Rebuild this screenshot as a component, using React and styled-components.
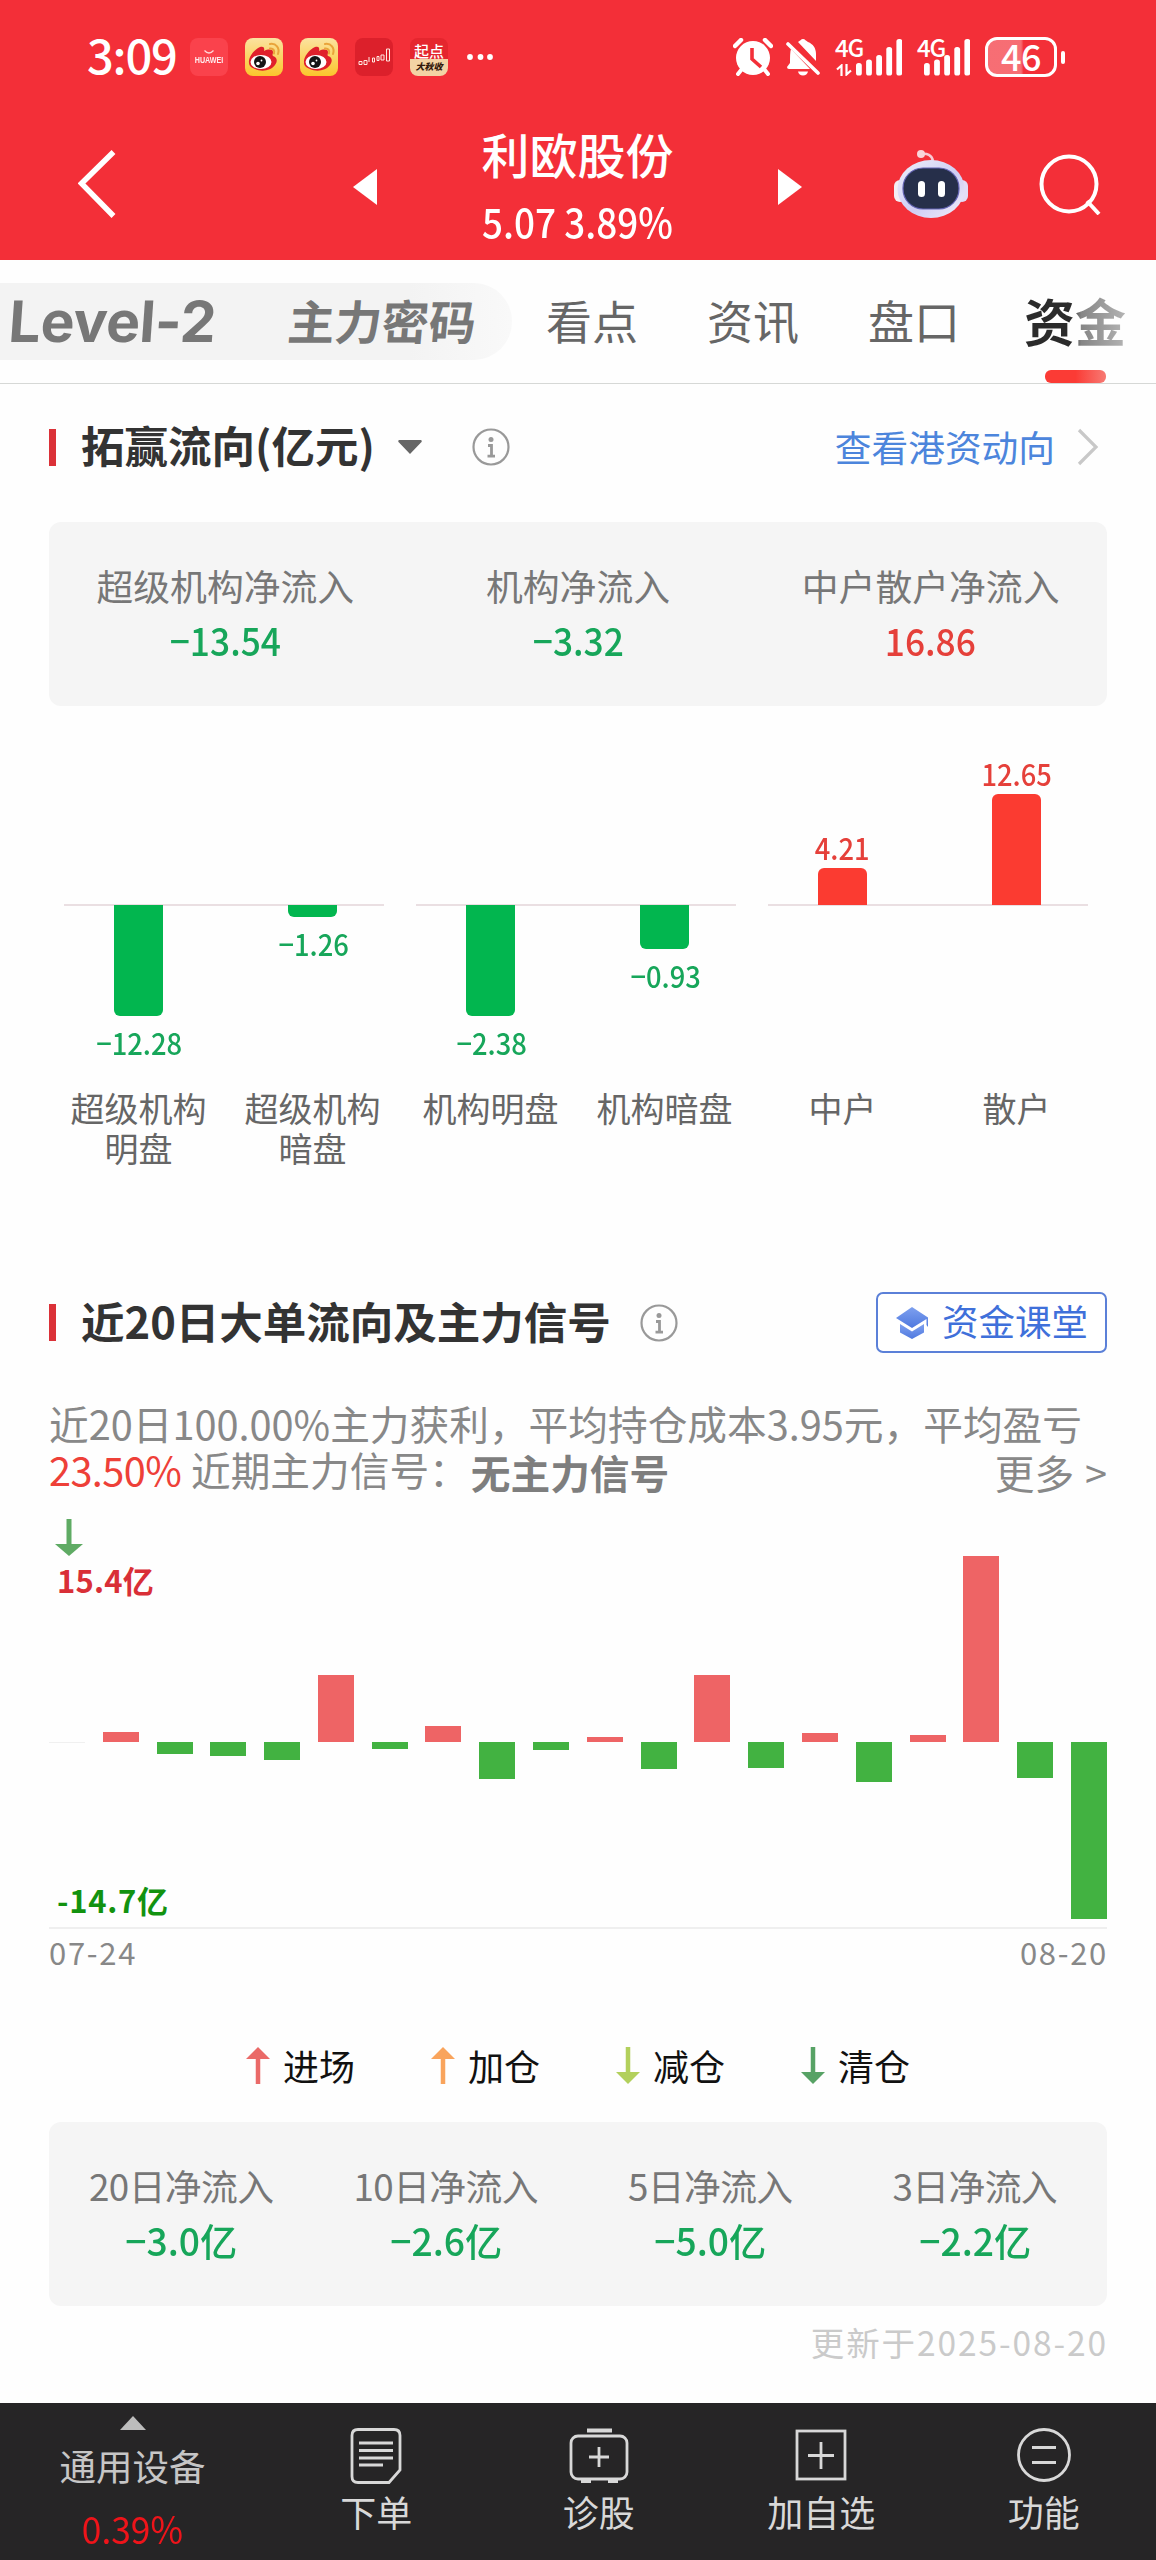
import React from "react";
import styled, { createGlobalStyle } from "styled-components";

const GlobalStyle = createGlobalStyle`
  * { box-sizing: border-box; }
  body {
    margin: 0;
    background: #fefefe;
    font-family: "Noto Sans CJK SC", "Noto Sans", sans-serif;
  }
`;

const RED = "#f32f38";
const UP = "#e5403a";
const DOWN = "#17a65a";

const Page = styled.div`
  width: 1156px;
  height: 2560px;
  display: flex;
  flex-direction: column;
  background: #fefefe;
  overflow: hidden;
  white-space: nowrap;
`;

/* ---------- header ---------- */

const Header = styled.header`
  height: 260px;
  background: ${RED};
  color: #fff;
`;

const StatusBar = styled.div`
  height: 114px;
  padding: 0 91px 0 87px;
  display: flex;
  align-items: center;
  justify-content: space-between;
`;

const StatusGroup = styled.div`
  display: flex;
  align-items: center;
  gap: ${(p) => p.$gap}px;
`;

const Clock = styled.span`
  width: 86px;
  font-size: 47px;
  font-weight: 500;
  line-height: 60px;
  letter-spacing: -1.2px;
  padding-bottom: 7px;
`;

const AppIcon = styled.span`
  width: 38px;
  height: 38px;
  border-radius: 8px;
  display: flex;
  flex-direction: column;
  align-items: center;
  justify-content: center;
  overflow: hidden;
  background: ${(p) => p.$bg};
`;

const HuaweiWord = styled.span`
  font: 700 8.5px/10px "Liberation Sans", sans-serif;
  transform: scaleX(0.84);
  opacity: 0.9;
`;

const QidianTop = styled.span`
  font-size: 15px;
  font-weight: 500;
  line-height: 16px;
  padding-top: 5px;
`;

const QidianBottom = styled.span`
  width: 38px;
  height: 17px;
  background: #f3d3a4;
  color: #33190c;
  font-size: 9px;
  font-weight: 900;
  line-height: 16px;
  text-align: center;
  font-style: italic;
`;

const SignalBox = styled.span`
  position: relative;
  display: flex;
  justify-content: flex-end;
  width: ${(p) => p.$width}px;
  height: 38px;
`;

const NetLabel = styled.span`
  position: absolute;
  left: 0;
  top: -3px;
  font-size: 24px;
  font-weight: 500;
  line-height: 24px;
  letter-spacing: -1.3px;
`;

const DataArrows = styled.svg`
  position: absolute;
  left: 1px;
  bottom: 0;
`;

const Battery = styled.span`
  width: 72px;
  height: 40px;
  border: 3px solid #fff;
  border-radius: 12px;
  background: linear-gradient(90deg, rgba(255, 255, 255, 0.3) 50%, transparent 54%);
  font-size: 36px;
  font-weight: 500;
  line-height: 30px;
  letter-spacing: -0.5px;
  text-align: center;
`;

const BatteryTip = styled.span`
  width: 4px;
  height: 13px;
  margin-left: 4px;
  border-radius: 2px;
  background: #fff;
`;

const BatteryWrap = styled.span`
  display: flex;
  align-items: center;
`;

const NavBar = styled.nav`
  height: 146px;
  display: grid;
  grid-template-columns: 353px 24px 401px 24px 354px;
  align-items: center;
`;

const NavLeft = styled.div`
  display: flex;
  padding: 0 0 6px 78px;
`;

const NavRight = styled.div`
  display: flex;
  align-items: center;
  gap: 69px;
  padding: 0 0 6px 91px;
`;

const StockHead = styled.div`
  text-align: center;
`;

const StockName = styled.h1`
  margin: 0;
  font-size: 48px;
  font-weight: 500;
  line-height: 66px;
`;

const StockPrice = styled.div`
  padding-top: 2px;
  font-size: 40.5px;
  font-weight: 500;
  line-height: 66px;
  transform: scaleX(0.91);
`;

/* ---------- tabs ---------- */

const TabBar = styled.div`
  height: 124px;
  display: flex;
  align-items: flex-start;
  border-bottom: 1px solid #d6d8d6;
  background: #fefefe;
`;

const TabPill = styled.div`
  width: 512px;
  height: 77px;
  margin: 23px 34px 0 0;
  padding-left: 9px;
  display: flex;
  align-items: center;
  border-radius: 0 38px 38px 0;
  background: linear-gradient(90deg, #f3f3f3 80%, #f9f9f9);
  color: #777;
`;

const LevelTab = styled.span`
  width: 279px;
  font-family: Inter, "Noto Sans", sans-serif;
  font-size: 57px;
  font-weight: 700;
  line-height: 77px;
  letter-spacing: -0.3px;
  transform: skewX(-4deg);
`;

const CodeTab = styled.span`
  font-size: 47px;
  font-weight: 700;
  line-height: 72px;
  padding-bottom: 3px;
  transform: skewX(-5deg);
`;

const Tab = styled.span`
  margin: 23px 69px 0 0;
  font-size: 46px;
  line-height: 72px;
  color: #666;
`;

const ActiveTab = styled.div`
  margin: 23px 0 0 -5px;
  display: flex;
  flex-direction: column;
  align-items: center;
`;

const ActiveText = styled.span`
  font-size: 51px;
  font-weight: 700;
  line-height: 74px;
  color: transparent;
  background: linear-gradient(90deg, #2b2b2b 46%, #858585 56%, #b4b4b4);
  background-clip: text;
  -webkit-background-clip: text;
`;

const ActiveLine = styled.span`
  width: 61px;
  height: 13px;
  margin-top: 13px;
  border-radius: 6px;
  background: linear-gradient(90deg, #fb3b35 50%, #f77a74);
`;

/* ---------- sections ---------- */

const Content = styled.main`
  padding: 0 49px;
`;

const SectionHead = styled.div`
  height: ${(p) => p.$height}px;
  display: flex;
  align-items: center;
  justify-content: space-between;
`;

const HeadLeft = styled.div`
  display: flex;
  align-items: center;
`;

const Marker = styled.span`
  width: 7px;
  height: 37px;
  margin: 0 25px 0 0;
  background: #db3138;
`;

const SectionTitle = styled.h2`
  margin: -4px 0 0;
  font-size: 43.5px;
  font-weight: 700;
  line-height: 60px;
  color: #333;
`;

const Caret = styled.svg`
  margin: 0 50px 0 23px;
`;

const InfoSlot = styled.span`
  display: flex;
  margin-left: ${(p) => p.$gap}px;
`;

const HeadLink = styled.a`
  display: flex;
  align-items: center;
  gap: 22px;
  padding-right: 8px;
  font-size: 36.7px;
  line-height: 50px;
  color: #4c85dc;
`;

const LinkText = styled.span`
  margin-top: -3px;
`;

const ClassButton = styled.button`
  width: 231px;
  height: 61px;
  display: flex;
  align-items: center;
  justify-content: center;
  gap: 13px;
  padding: 0;
  border: 2px solid #5b80d8;
  border-radius: 7px;
  background: #fff;
  color: #3f70da;
  font-family: inherit;
  font-size: 36.5px;
  line-height: 50px;
`;

/* ---------- summary cards ---------- */

const Card = styled.div`
  height: 184px;
  margin-top: ${(p) => p.$top}px;
  padding-top: 38px;
  display: grid;
  grid-template-columns: repeat(${(p) => p.$cols}, 1fr);
  align-items: start;
  border-radius: 12px;
  background: #f5f5f5;
  text-align: center;
`;

const CardLabel = styled.div`
  font-size: 36.8px;
  line-height: 50px;
  letter-spacing: ${(p) => p.$tight || 0}px;
  color: #777;
`;

const CardValue = styled.div`
  margin-top: 2px;
  font-size: 38px;
  font-weight: 500;
  line-height: 56px;
  transform: scaleX(${(p) => p.$fit});
  color: ${(p) => (p.$up ? UP : DOWN)};
`;

/* ---------- grouped chart ---------- */

const GroupRow = styled.div`
  display: flex;
  gap: 32px;
  padding-left: 15px;
`;

const Group = styled.div`
  width: 320px;
  display: grid;
  grid-template-columns: 149px 143px;
  column-gap: 28px;
  background: linear-gradient(#eadfe2, #eadfe2) 0 198px / 100% 2px no-repeat;
`;

const GroupCol = styled.div`
  display: flex;
  flex-direction: column;
  align-items: center;
`;

const UpperHalf = styled.div`
  height: 199px;
  display: flex;
  flex-direction: column;
  align-items: center;
  justify-content: flex-end;
`;

const LowerHalf = styled.div`
  height: 183px;
  display: flex;
  flex-direction: column;
  align-items: center;
`;

const GroupBar = styled.div`
  width: 49px;
  border-radius: ${(p) => (p.$up ? "6px 6px 0 0" : "0 0 6px 6px")};
  background: ${(p) => (p.$up ? "#fb3b31" : "#02b64f")};
`;

const BarValue = styled.div`
  font-size: 30px;
  font-weight: 500;
  line-height: 40px;
  transform: scaleX(0.91);
  padding: ${(p) => (p.$up ? "0 0 1px" : "6px 0 0 2px")};
  color: ${(p) => (p.$up ? UP : DOWN)};
`;

const BarLabel = styled.div`
  font-size: 34px;
  line-height: 40px;
  height: 80px;
  margin-bottom: 124px;
  text-align: center;
  color: #666;
`;

/* ---------- summary text ---------- */

const Summary = styled.div`
  margin-top: 47px;
  font-size: 39.7px;
  line-height: 46px;
  color: #888;
`;

const SummaryLine = styled.div`
  height: 46px;
  display: flex;
`;

const Profit = styled.span`
  width: 142px;
  letter-spacing: -0.6px;
  color: #ee4038;
`;

const Signal = styled.strong`
  margin-left: 2px;
  padding-top: 3px;
  font-weight: 700;
  color: #7e7e7e;
`;

const More = styled.span`
  margin-left: auto;
  padding-top: 3px;
  word-spacing: 2px;
`;

const ArrowSlot = styled.div`
  display: flex;
  height: 37px;
  margin-top: 27px;
  padding-left: 6px;
`;

/* ---------- 20 day chart ---------- */

const DayChart = styled.div`
  position: relative;
  height: 373px;
  display: flex;
  justify-content: space-between;
  border-bottom: 2px solid #efefef;
`;

const DayCol = styled.div`
  width: 36px;
  padding-top: ${(p) => (p.$v > 0 ? 186 - p.$v : 186)}px;
`;

const DayBar = styled.div`
  height: ${(p) => Math.abs(p.$v) || 1}px;
  background: ${(p) => (p.$v > 0 ? "#ee6465" : p.$v < 0 ? "#42b241" : "#f0f0f0")};
`;

const AxisMark = styled.span`
  position: absolute;
  left: 8px;
  ${(p) => (p.$up ? "top: 4px;" : "bottom: 7px;")}
  font-size: 31px;
  font-weight: 700;
  line-height: 40px;
  letter-spacing: ${(p) => (p.$up ? 0.2 : 0.7)}px;
  color: ${(p) => (p.$up ? "#d92f37" : "#12920f")};
`;

const Dates = styled.div`
  display: flex;
  justify-content: space-between;
  font-size: 31px;
  line-height: 46px;
  letter-spacing: 1.7px;
  margin-right: -1px;
  color: #888;
`;

const Legend = styled.div`
  height: 40px;
  margin-top: 70px;
  display: flex;
  justify-content: center;
  gap: 76px;
`;

const LegendItem = styled.span`
  display: flex;
  align-items: center;
  gap: 13px;
  font-size: 36px;
  line-height: 40px;
  color: #111;
`;

const Updated = styled.div`
  margin: 16px -1px 0 0;
  font-size: 33.5px;
  line-height: 40px;
  letter-spacing: 1.9px;
  text-align: right;
  color: #cacaca;
`;

/* ---------- bottom bar ---------- */

const Footer = styled.footer`
  height: 157px;
  margin-top: auto;
  display: grid;
  grid-template-columns: 265px repeat(4, 222.5px);
  background: #262526;
  color: #d8d8d8;
  text-align: center;
`;

const Sector = styled.div`
  display: flex;
  flex-direction: column;
  align-items: center;
  padding-top: 13px;
  font-size: 36.5px;
`;

const SectorName = styled.span`
  margin-top: 13px;
  line-height: 46px;
  color: #c6c6c6;
`;

const SectorRate = styled.span`
  margin-top: 16px;
  font-size: 38px;
  line-height: 46px;
  transform: scaleX(0.93);
  color: #ee141a;
`;

const FootItem = styled.div`
  display: flex;
  flex-direction: column;
  align-items: center;
  padding-top: 24px;
  font-size: 36px;
  line-height: 46px;
`;

const FootIcon = styled.svg`
  width: 60px;
  height: 58px;
  margin-bottom: 3px;
  fill: none;
  stroke: #d8d8d8;
  stroke-width: 2.8;
`;

/* ---------- drawings ---------- */

const Weibo = () => (
  <AppIcon $bg="linear-gradient(#fbe3a0, #fbc62c)">
    <svg width="38" height="38" viewBox="0 0 38 38">
      <path d="M4 25C3 19 10 11 15 9c3-1 5 0 4 4 4-2 9-2 9 1 0 2-1 3 0 4 4 1 5 5 2 9-4 6-14 7-20 4-3-1-6-3-6-6z" fill="#e0202b" />
      <ellipse cx="16" cy="24" rx="10.5" ry="7" fill="#fff" />
      <circle cx="15" cy="24" r="6" fill="#151515" />
      <circle cx="13" cy="25.5" r="1.8" fill="#fff" />
      <circle cx="16.5" cy="22.5" r="0.9" fill="#fff" />
      <path d="M25 6c6-1 10 4 8 10M25 10.5c3-.5 5 2 4 5" fill="none" stroke="#e9a43a" strokeWidth="2" strokeLinecap="round" />
    </svg>
  </AppIcon>
);

const Huawei = () => (
  <AppIcon $bg="#fa424c">
    <svg width="12" height="5" viewBox="0 0 12 5">
      <path d="M1.500 .5q4.500 5 9 0" fill="none" stroke="#ffd5d5" strokeWidth="1.300" />
    </svg>
    <HuaweiWord>HUAWEI</HuaweiWord>
  </AppIcon>
);

const TrendApp = () => (
  <AppIcon $bg="#dc202b">
    <svg width="38" height="38" viewBox="0 0 38 38" fill="none" stroke="#ffe9e2" strokeWidth="1">
      <path d="M4 23.500h3v3H4zM9 22.500h3v4H9zM14 19v5M17.500 20h2v4h-2zM22 18.500h2v4h-2zM26 17h3v5h-3zM31.500 11h3v12h-3z" />
    </svg>
  </AppIcon>
);

const Dots = () => (
  <svg width="28" height="6" viewBox="-2 0 28 6" fill="#fff">
    <circle cx="3" cy="3" r="2.900" />
    <circle cx="13.500" cy="3" r="2.900" />
    <circle cx="23" cy="3" r="2.900" />
  </svg>
);

const AlarmSvg = styled.svg`
  margin-right: -2px;
`;

const Alarm = () => (
  <AlarmSvg width="40" height="38" viewBox="0 0 40 38">
    <path d="M2 8l6-6M38 8l-6-6" stroke="#fff" strokeWidth="4.500" strokeLinecap="round" />
    <path d="M9 31l-4 5M31 31l4 5" stroke="#fff" strokeWidth="4" strokeLinecap="round" />
    <circle cx="20" cy="20" r="17" fill="#fff" />
    <path d="M19 10v11l9 8" fill="none" stroke={RED} strokeWidth="3.600" />
  </AlarmSvg>
);

const Mute = () => (
  <svg width="34" height="38" viewBox="0 0 34 38">
    <path d="M12 4c2-1 3-3 5-3s3 2 5 3c5 2 8 6 8 12v7z" fill="#fff" />
    <path d="M5 11c-1 3-1 8-1 14l-3 4q0 2 2 2h21z" fill="#fff" />
    <path d="M12 33.500h10q-1 4-5 4t-5-4z" fill="#fff" />
    <path d="M2 6l30 29" stroke="#fff" strokeWidth="3.600" strokeLinecap="round" />
  </svg>
);

const BAR_TOPS = [25, 21.5, 17, 9, 1];

const CellSignal = ({ width, data }) => (
  <SignalBox $width={width}>
    <NetLabel>4G</NetLabel>
    {data && (
      <DataArrows width="17" height="12" viewBox="0 0 17 12" fill="none" stroke="#fff" strokeWidth="2.200">
        <path d="M1 5.500L5.500 1.500V12M10.500 0v10.500L15 6.500" />
      </DataArrows>
    )}
    <svg width="46" height="38" viewBox="0 0 46 38" fill="#fff">
      {BAR_TOPS.map((t, i) => (
        <rect key={t} x={i * 10.1} y={t} width="5.800" height={37.5 - t} rx="2.600" />
      ))}
    </svg>
  </SignalBox>
);

const Robot = () => (
  <svg width="76" height="70" viewBox="0 0 76 70">
    <defs>
      <linearGradient id="shell" x1="0" y1="0" x2="1" y2="1">
        <stop offset="0" stopColor="#eef0fc" />
        <stop offset="0.550" stopColor="#cfcdf3" />
        <stop offset="1" stopColor="#f3eefa" />
      </linearGradient>
    </defs>
    <path d="M28 5c6-1 11 1 12 7" fill="none" stroke="#f8c9d4" strokeWidth="2.500" />
    <circle cx="28" cy="5" r="4" fill="#f9d5da" />
    <rect x="1" y="31" width="12" height="22" rx="6" fill="#f4eef4" />
    <rect x="63" y="31" width="12" height="22" rx="6" fill="#e3dcf6" />
    <ellipse cx="38" cy="40" rx="33.500" ry="29" fill="url(#shell)" />
    <rect x="10" y="19" width="56" height="41" rx="20" fill="#262f4a" stroke="#6464b4" strokeWidth="1.200" />
    <rect x="25" y="32" width="7" height="16" rx="3.500" fill="#fff" />
    <rect x="45" y="32" width="7" height="16" rx="3.500" fill="#fff" />
  </svg>
);

const Info = () => (
  <svg width="38" height="38" viewBox="0 0 38 38" fill="none" stroke="#999">
    <circle cx="19" cy="19" r="17.500" strokeWidth="2.200" />
    <circle cx="19" cy="11.500" r="2.500" fill="#999" stroke="none" />
    <path d="M16 17.500h3.500V28M15.500 28.200h7.500" strokeWidth="2.800" />
  </svg>
);

const CapIcon = () => (
  <svg width="34" height="32" viewBox="0 0 34 32">
    <defs>
      <linearGradient id="cap" x1="0" y1="0" x2="0" y2="1">
        <stop offset="0" stopColor="#7ea0ef" />
        <stop offset="1" stopColor="#4f79df" />
      </linearGradient>
    </defs>
    <path d="M17 0L33 10.500V20l-1.500-2v-6L17 21 1 11z" fill="url(#cap)" />
    <path d="M5 17l12 7.500L29 17v8.500L17 32 5 25.500z" fill="url(#cap)" />
  </svg>
);

const Arrow = ({ color, up, width, height, stroke, head }) => (
  <svg width={width} height={height} viewBox={`0 0 ${width} ${height}`}>
    <g transform={up ? `rotate(180 ${width / 2} ${height / 2})` : undefined} fill={color}>
      <rect x={(width - stroke) / 2} y="0" width={stroke} height={height - head + 1} />
      <path d={`M0 ${height - head}H${width}L${width / 2} ${height}z`} />
    </g>
  </svg>
);

/* ---------- data ---------- */

const flows = [
  { label: "超级机构净流入", value: "−13.54" },
  { label: "机构净流入", value: "−3.32" },
  { label: "中户散户净流入", value: "16.86", up: true },
];

const groups = [
  [
    { label: ["超级机构", "明盘"], value: "−12.28", h: 111 },
    { label: ["超级机构", "暗盘"], value: "−1.26", h: 12 },
  ],
  [
    { label: ["机构明盘"], value: "−2.38", h: 111 },
    { label: ["机构暗盘"], value: "−0.93", h: 44 },
  ],
  [
    { label: ["中户"], value: "4.21", h: 37, up: true },
    { label: ["散户"], value: "12.65", h: 111, up: true },
  ],
];

const days = [0, 10, -12, -13.5, -18, 67, -7, 16, -36.5, -8, 5, -26.5, 67.5, -25.5, 9, -40, 7, 186, -36, -176.5];

const legend = [
  { text: "进场", color: "#ea6a68", up: true },
  { text: "加仓", color: "#f9a45c", up: true },
  { text: "减仓", color: "#b2d05c" },
  { text: "清仓", color: "#57a265" },
];

const totals = [
  { label: "20日净流入", value: "−3.0亿" },
  { label: "10日净流入", value: "−2.6亿" },
  { label: "5日净流入", value: "−5.0亿" },
  { label: "3日净流入", value: "−2.2亿" },
];

const actions = [
  {
    text: "下单",
    icon: (
      <>
        <path d="M12 2.500h36q6 0 6 6V43L43 55.500H12q-6 0-6-6v-41q0-6 6-6z" />
        <path d="M13 16h34M13 23.500h34M13 31h34M13 38h24" />
      </>
    ),
  },
  {
    text: "诊股",
    icon: (
      <>
        <path d="M18 3.500h25" strokeWidth="4" />
        <rect x="2" y="9" width="56" height="43" rx="7" />
        <path d="M30 20v20M20 30h20" />
        <path d="M12 54h10M39 54h10" strokeWidth="4" />
      </>
    ),
  },
  {
    text: "加自选",
    icon: (
      <>
        <rect x="6" y="4" width="48" height="48" />
        <path d="M30 15v27M17 28.500h26" />
      </>
    ),
  },
  {
    text: "功能",
    icon: (
      <>
        <circle cx="30" cy="28" r="25.500" />
        <path d="M18 20.500h24M18 35.500h24" />
      </>
    ),
  },
];

export default function App() {
  return (
    <Page>
      <GlobalStyle />
      <Header>
        <StatusBar>
          <StatusGroup $gap={17}>
            <Clock>3:09</Clock>
            <Huawei />
            <Weibo />
            <Weibo />
            <TrendApp />
            <AppIcon $bg="#e5262e">
              <QidianTop>起点</QidianTop>
              <QidianBottom>大秋收</QidianBottom>
            </AppIcon>
            <Dots />
          </StatusGroup>
          <StatusGroup $gap={15}>
            <Alarm />
            <Mute />
            <CellSignal width={67} data />
            <CellSignal width={53} />
            <BatteryWrap>
              <Battery>46</Battery>
              <BatteryTip />
            </BatteryWrap>
          </StatusGroup>
        </StatusBar>
        <NavBar>
          <NavLeft>
            <svg width="38" height="68" viewBox="0 0 38 68">
              <path d="M35.500 2L3.500 33.500 35.500 66" fill="none" stroke="#fff" strokeWidth="5.500" />
            </svg>
          </NavLeft>
          <svg width="24" height="36" viewBox="0 0 24 36">
            <path d="M24 0v36L0 18z" fill="#fff" />
          </svg>
          <StockHead>
            <StockName>利欧股份</StockName>
            <StockPrice>5.07 3.89%</StockPrice>
          </StockHead>
          <svg width="24" height="36" viewBox="0 0 24 36">
            <path d="M0 0v36l24-18z" fill="#fff" />
          </svg>
          <NavRight>
            <Robot />
            <svg width="63" height="62" viewBox="0 0 63 62" fill="none" stroke="#fff" strokeWidth="4">
              <circle cx="31" cy="31" r="27.500" />
              <path d="M49 48l12 13" />
            </svg>
          </NavRight>
        </NavBar>
      </Header>

      <TabBar>
        <TabPill>
          <LevelTab>Level-2</LevelTab>
          <CodeTab>主力密码</CodeTab>
        </TabPill>
        <Tab>看点</Tab>
        <Tab>资讯</Tab>
        <Tab>盘口</Tab>
        <ActiveTab>
          <ActiveText>资金</ActiveText>
          <ActiveLine />
        </ActiveTab>
      </TabBar>

      <Content>
        <SectionHead $height={126}>
          <HeadLeft>
            <Marker />
            <SectionTitle>拓赢流向(亿元)</SectionTitle>
            <Caret width="24" height="14" viewBox="0 0 24 14">
              <path d="M1 0h22q1.500 1 0 2.500L12 14 1 2.500Q-.5 1 1 0z" fill="#666" />
            </Caret>
            <Info />
          </HeadLeft>
          <HeadLink>
            <LinkText>查看港资动向</LinkText>
            <svg width="22" height="38" viewBox="0 0 22 38">
              <path d="M2 2l17 17L2 36" fill="none" stroke="#c8c8c8" strokeWidth="3.200" />
            </svg>
          </HeadLink>
        </SectionHead>

        <Card $cols={3} $top={12}>
          {flows.map((f) => (
            <div key={f.label}>
              <CardLabel>{f.label}</CardLabel>
              <CardValue $up={f.up} $fit={0.93}>{f.value}</CardValue>
            </div>
          ))}
        </Card>

        <GroupRow>
          {groups.map((g, i) => (
            <Group key={i}>
              {g.map((b) => (
                <GroupCol key={b.value}>
                  <UpperHalf>
                    {b.up && (
                      <>
                        <BarValue $up>{b.value}</BarValue>
                        <GroupBar $up style={{ height: b.h }} />
                      </>
                    )}
                  </UpperHalf>
                  <LowerHalf>
                    {!b.up && (
                      <>
                        <GroupBar style={{ height: b.h }} />
                        <BarValue>{b.value}</BarValue>
                      </>
                    )}
                  </LowerHalf>
                  <BarLabel>
                    {b.label.map((l) => (
                      <div key={l}>{l}</div>
                    ))}
                  </BarLabel>
                </GroupCol>
              ))}
            </Group>
          ))}
        </GroupRow>

        <SectionHead $height={61}>
          <HeadLeft>
            <Marker />
            <SectionTitle>近20日大单流向及主力信号</SectionTitle>
            <InfoSlot $gap={29}>
              <Info />
            </InfoSlot>
          </HeadLeft>
          <ClassButton>
            <CapIcon />
            <LinkText>资金课堂</LinkText>
          </ClassButton>
        </SectionHead>

        <Summary>
          <SummaryLine>近20日100.00%主力获利，平均持仓成本3.95元，平均盈亏</SummaryLine>
          <SummaryLine>
            <Profit>23.50%</Profit>
            <span>近期主力信号：</span>
            <Signal>无主力信号</Signal>
            <More>更多 &gt;</More>
          </SummaryLine>
        </Summary>

        <ArrowSlot>
          <Arrow color="#5fab64" width={28} height={37} stroke={5} head={12} />
        </ArrowSlot>

        <DayChart>
          {days.map((v, i) => (
            <DayCol key={i} $v={v}>
              <DayBar $v={v} />
            </DayCol>
          ))}
          <AxisMark $up>15.4亿</AxisMark>
          <AxisMark>-14.7亿</AxisMark>
        </DayChart>
        <Dates>
          <span>07-24</span>
          <span>08-20</span>
        </Dates>

        <Legend>
          {legend.map((l) => (
            <LegendItem key={l.text}>
              <Arrow color={l.color} up={l.up} width={24} height={37} stroke={4.5} head={12} />
              {l.text}
            </LegendItem>
          ))}
        </Legend>

        <Card $cols={4} $top={37}>
          {totals.map((t) => (
            <div key={t.label}>
              <CardLabel $tight={-0.6}>{t.label}</CardLabel>
              <CardValue $fit={0.98}>{t.value}</CardValue>
            </div>
          ))}
        </Card>
        <Updated>更新于2025-08-20</Updated>
      </Content>

      <Footer>
        <Sector>
          <svg width="26" height="14" viewBox="0 0 26 14">
            <path d="M13 0l13 14H0z" fill="#bcbcbc" />
          </svg>
          <SectorName>通用设备</SectorName>
          <SectorRate>0.39%</SectorRate>
        </Sector>
        {actions.map((a) => (
          <FootItem key={a.text}>
            <FootIcon viewBox="0 0 60 58">{a.icon}</FootIcon>
            {a.text}
          </FootItem>
        ))}
      </Footer>
    </Page>
  );
}
